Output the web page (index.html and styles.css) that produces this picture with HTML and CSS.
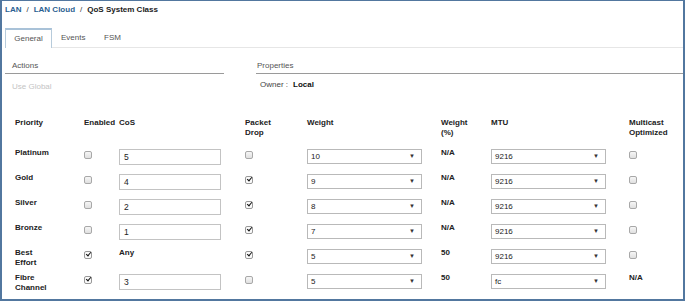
FILE: index.html
```html
<!DOCTYPE html>
<html>
<head>
<meta charset="utf-8">
<link rel="stylesheet" href="styles.css">
</head>
<body>
<div class="frame">
  <div class="crumbs"><a class="link">LAN</a><span class="sep">/</span><a class="link">LAN Cloud</a><span class="sep">/</span><span class="current">QoS System Class</span></div>
  <div class="tabs">
    <div class="tab active">General</div>
    <div class="tab">Events</div>
    <div class="tab">FSM</div>
    <div class="tab-rest"></div>
  </div>
  <div class="panels">
    <div class="panel actions">
      <div class="panel-title">Actions</div>
      <div class="disabled">Use Global</div>
    </div>
    <div class="panel props">
      <div class="panel-title">Properties</div>
      <div class="owner">Owner :<b>Local</b></div>
    </div>
  </div>
  <div class="grid">
    <div class="h">Priority</div>
    <div class="h">Enabled</div>
    <div class="h">CoS</div>
    <div class="h">Packet<br>Drop</div>
    <div class="h">Weight</div>
    <div class="h">Weight<br>(%)</div>
    <div class="h">MTU</div>
    <div class="h">Multicast<br>Optimized</div>

    <div class="l">Platinum</div>
    <div><span class="cb"></span></div>
    <div><span class="inp">5</span></div>
    <div><span class="cb"></span></div>
    <div><span class="sel"><span>10</span><i>▼</i></span></div>
    <div class="l">N/A</div>
    <div><span class="sel"><span>9216</span><i>▼</i></span></div>
    <div><span class="cb"></span></div>

    <div class="l">Gold</div>
    <div><span class="cb"></span></div>
    <div><span class="inp">4</span></div>
    <div><span class="cb on"></span></div>
    <div><span class="sel"><span>9</span><i>▼</i></span></div>
    <div class="l">N/A</div>
    <div><span class="sel"><span>9216</span><i>▼</i></span></div>
    <div><span class="cb"></span></div>

    <div class="l">Silver</div>
    <div><span class="cb"></span></div>
    <div><span class="inp">2</span></div>
    <div><span class="cb on"></span></div>
    <div><span class="sel"><span>8</span><i>▼</i></span></div>
    <div class="l">N/A</div>
    <div><span class="sel"><span>9216</span><i>▼</i></span></div>
    <div><span class="cb"></span></div>

    <div class="l">Bronze</div>
    <div><span class="cb"></span></div>
    <div><span class="inp">1</span></div>
    <div><span class="cb on"></span></div>
    <div><span class="sel"><span>7</span><i>▼</i></span></div>
    <div class="l">N/A</div>
    <div><span class="sel"><span>9216</span><i>▼</i></span></div>
    <div><span class="cb"></span></div>

    <div class="l">Best<br>Effort</div>
    <div><span class="cb on"></span></div>
    <div class="l">Any</div>
    <div><span class="cb on"></span></div>
    <div><span class="sel"><span>5</span><i>▼</i></span></div>
    <div class="l">50</div>
    <div><span class="sel"><span>9216</span><i>▼</i></span></div>
    <div><span class="cb"></span></div>

    <div class="l">Fibre<br>Channel</div>
    <div><span class="cb on"></span></div>
    <div><span class="inp">3</span></div>
    <div><span class="cb"></span></div>
    <div><span class="sel"><span>5</span><i>▼</i></span></div>
    <div class="l">50</div>
    <div><span class="sel"><span>fc</span><i>▼</i></span></div>
    <div class="l">N/A</div>
  </div>
</div>
</body>
</html>
```
FILE: styles.css
```css
* { box-sizing: border-box; }
html, body { margin: 0; padding: 0; background: #fff; }
body {
  font-family: "Liberation Sans", Arial, sans-serif;
  font-size: 8px;
  color: #222;
  width: 686px;
  height: 301px;
  overflow: hidden;
}
.frame {
  width: 685px;
  height: 301px;
  border: 2px solid #52779f;
  border-top-width: 1px;
  border-right-width: 2px;
  overflow: hidden;
}
.crumbs {
  height: 18px;
  padding: 3px 0 0 3px;
  font-size: 8px;
  font-weight: bold;
  line-height: 12px;
}
.crumbs .link { color: #2b5f92; }
.crumbs .sep { color: #333; margin: 0 5px; font-weight: normal; }
.crumbs .current { color: #1a1a1a; }
.tabs {
  display: flex;
  height: 29px;
  padding-top: 9px;
}
.tab {
  width: 47px;
  height: 20px;
  padding-top: 5px;
  text-align: center;
  color: #555;
  font-size: 8px;
  border-bottom: 1px solid #e6e6e6;
  white-space: nowrap;
}
.tab:first-child { margin-left: 3px; }
.tab + .tab { width: 43px; text-align: left; padding-left: 9px; }
.tab.active {
  border: 1px solid #b7cbdb;
  border-top: 2px solid #a9c2d8;
  border-bottom: none;
  padding-top: 4px;
  background: #fff;
}
.tab-rest { flex: 1; border-bottom: 1px solid #e6e6e6; height: 20px; }
.panels {
  display: flex;
  padding-top: 11px;
  height: 70px;
}
.panel-title {
  font-size: 8px;
  color: #555;
  height: 15px;
  line-height: 14px;
  border-bottom: 1px solid #9a9a9a;
  padding-left: 7px;
}
.actions { width: 219px; margin-left: 3px; }
.props { flex: 1; margin-left: 32px; }
.props .panel-title { padding-left: 1px; }
.disabled { color: #c4c4c4; padding: 8px 0 0 7px; font-size: 8px; }
.owner { color: #444; padding: 6px 0 0 4px; font-size: 8px; }
.owner b { color: #111; margin-left: 5px; }
.grid {
  display: grid;
  grid-template-columns: 69px 35px 126px 62px 134px 50px 138px 1fr;
  grid-template-rows: 31px repeat(6, 25px);
  padding-left: 13px;
}
.grid > div { line-height: 10px; }
.h { font-weight: bold; color: #222; }
.l { font-weight: bold; color: #222; margin-top: -1px; }
.cb {
  display: block;
  width: 8px;
  height: 8px;
  margin-top: 2px;
  border: 1px solid #a8a8a8;
  border-radius: 2px;
  background: linear-gradient(#f6f6f6, #e0e0e0);
  position: relative;
}
.cb.on { background: #fafafa; border-color: #999; }
.cb.on::after {
  content: "";
  position: absolute;
  left: 1px;
  top: 0px;
  width: 4px;
  height: 2px;
  border-left: 1.5px solid #111;
  border-bottom: 1.5px solid #111;
  transform: rotate(-50deg);
}
.inp {
  display: block;
  width: 102px;
  height: 16px;
  border: 1px solid #c3c3c3;
  padding-left: 4px;
  font-size: 8.5px;
  line-height: 14px;
  color: #222;
  background: #fff;
}
.sel {
  display: flex;
  justify-content: space-between;
  width: 115px;
  height: 15px;
  border: 1px solid #b9b9b9;
  padding: 0 6px 0 3px;
  font-size: 8px;
  line-height: 13px;
  color: #222;
  background: #fff;
}
.sel i { font-style: normal; font-size: 6px; color: #333; }
```
